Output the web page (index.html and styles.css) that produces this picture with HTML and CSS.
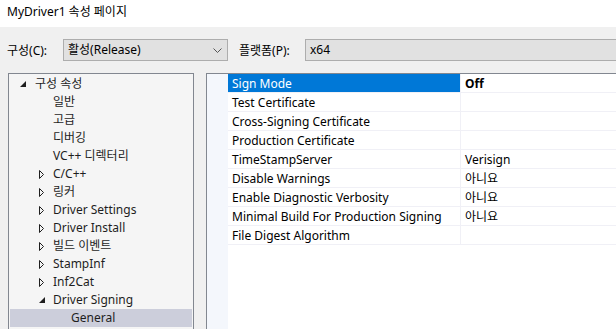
FILE: index.html
```html
<!DOCTYPE html>
<html lang="ko">
<head>
    <meta charset="UTF-8">
    <title>MyDriver1 속성 페이지</title>
    <link rel="stylesheet" href="styles.css">
</head>
<body>

    <div class="titlebar">MyDriver1 속성 페이지</div>

    <div class="dialog">
        <!-- Configuration / platform row -->
        <div class="config-row">
            <span class="config-label">구성(C):</span>
            <div class="combo">
                <span>활성(Release)</span>
                <svg class="chevron" width="9" height="5" viewBox="0 0 9 5"><polyline points="0.5,0.5 4.5,4.5 8.5,0.5" fill="none" stroke="#555" stroke-width="1"/></svg>
            </div>
            <span class="platform-label">플랫폼(P):</span>
            <div class="combo platform">x64</div>
        </div>

        <div class="panes">
            <!-- Category tree -->
            <ul class="tree">
                <li class="node lvl0"><svg class="expanded" width="6" height="6" viewBox="0 0 6 6"><polygon points="6,0 6,6 0,6" fill="#1e1e1e"/></svg>구성 속성</li>
                <li class="node lvl1">일반</li>
                <li class="node lvl1">고급</li>
                <li class="node lvl1">디버깅</li>
                <li class="node lvl1">VC++ 디렉터리</li>
                <li class="node lvl1"><svg class="collapsed" width="5" height="9" viewBox="0 0 5 9"><polygon points="0.5,0.5 4.5,4.5 0.5,8.5" fill="none" stroke="#1e1e1e" stroke-width="1"/></svg>C/C++</li>
                <li class="node lvl1"><svg class="collapsed" width="5" height="9" viewBox="0 0 5 9"><polygon points="0.5,0.5 4.5,4.5 0.5,8.5" fill="none" stroke="#1e1e1e" stroke-width="1"/></svg>링커</li>
                <li class="node lvl1"><svg class="collapsed" width="5" height="9" viewBox="0 0 5 9"><polygon points="0.5,0.5 4.5,4.5 0.5,8.5" fill="none" stroke="#1e1e1e" stroke-width="1"/></svg>Driver Settings</li>
                <li class="node lvl1"><svg class="collapsed" width="5" height="9" viewBox="0 0 5 9"><polygon points="0.5,0.5 4.5,4.5 0.5,8.5" fill="none" stroke="#1e1e1e" stroke-width="1"/></svg>Driver Install</li>
                <li class="node lvl1"><svg class="collapsed" width="5" height="9" viewBox="0 0 5 9"><polygon points="0.5,0.5 4.5,4.5 0.5,8.5" fill="none" stroke="#1e1e1e" stroke-width="1"/></svg>빌드 이벤트</li>
                <li class="node lvl1"><svg class="collapsed" width="5" height="9" viewBox="0 0 5 9"><polygon points="0.5,0.5 4.5,4.5 0.5,8.5" fill="none" stroke="#1e1e1e" stroke-width="1"/></svg>StampInf</li>
                <li class="node lvl1"><svg class="collapsed" width="5" height="9" viewBox="0 0 5 9"><polygon points="0.5,0.5 4.5,4.5 0.5,8.5" fill="none" stroke="#1e1e1e" stroke-width="1"/></svg>Inf2Cat</li>
                <li class="node lvl1"><svg class="expanded" width="6" height="6" viewBox="0 0 6 6"><polygon points="6,0 6,6 0,6" fill="#1e1e1e"/></svg>Driver Signing</li>
                <li class="node lvl2 selected">General</li>
            </ul>

            <!-- Property grid -->
            <div class="grid">
                <div class="row active"><span class="name">Sign Mode</span><span class="value bold">Off</span></div>
                <div class="row"><span class="name">Test Certificate</span><span class="value"></span></div>
                <div class="row"><span class="name">Cross-Signing Certificate</span><span class="value"></span></div>
                <div class="row"><span class="name">Production Certificate</span><span class="value"></span></div>
                <div class="row"><span class="name">TimeStampServer</span><span class="value">Verisign</span></div>
                <div class="row"><span class="name">Disable Warnings</span><span class="value">아니요</span></div>
                <div class="row"><span class="name">Enable Diagnostic Verbosity</span><span class="value">아니요</span></div>
                <div class="row"><span class="name">Minimal Build For Production Signing</span><span class="value">아니요</span></div>
                <div class="row"><span class="name">File Digest Algorithm</span><span class="value"></span></div>
            </div>
        </div>
    </div>

</body>
</html>
```

FILE: styles.css
```css
html, body {
    margin: 0;
    height: 100%;
    overflow: hidden;
}

body {
    font-family: "Segoe UI", "Noto Sans", "Noto Sans CJK KR", sans-serif;
    font-size: 12px;
    color: #1e1e1e;
    background-color: #f0f0f0;
}

.titlebar {
    height: 27px;
    line-height: 24px;
    padding-left: 7px;
    background-color: #fff;
    color: #000;
}

.config-row {
    display: flex;
    align-items: center;
    height: 46px;
    padding-left: 7px;
    color: #000;
}

.config-label {
    width: 56px;
}

.combo {
    box-sizing: border-box;
    height: 22px;
    line-height: 20px;
    padding-left: 4px;
    border: 1px solid #adadad;
    background-color: #e1e1e1;
    display: flex;
    align-items: center;
}

.combo span {
    flex: 1;
}

.combo:first-of-type {
    width: 165px;
}

.chevron {
    margin-right: 5px;
}

.platform-label {
    margin-left: 11px;
    width: 66px;
}

.combo.platform {
    flex: 1;
    margin-right: -20px;
}

.panes {
    display: flex;
    align-items: flex-start;
    padding-left: 8px;
    gap: 12px;
    height: 256px;
}

.tree {
    box-sizing: border-box;
    list-style: none;
    margin: 0;
    padding: 1px 0 0 1px;
    width: 186px;
    height: 100%;
    border: 1px solid #828790;
    border-bottom: none;
    background-color: #f5f5f5;
}

.node {
    height: 18px;
    line-height: 18px;
    display: flex;
    align-items: center;
    white-space: nowrap;
}

.node svg {
    flex: none;
}

.lvl0 {
    padding-left: 10px;
}

.lvl0 .expanded {
    margin-right: 9px;
}

.lvl1 {
    padding-left: 43px;
}

.lvl1 .collapsed {
    margin-left: -14px;
    margin-right: 9px;
}

.lvl1 .expanded {
    margin-left: -14px;
    margin-right: 8px;
}

.lvl2 {
    padding-left: 61px;
    width: 182px;
    box-sizing: border-box;
}

.selected {
    background-color: #cccedb;
}

.grid {
    flex: 1;
    height: 100%;
    margin-right: -20px;
    border-top: 1px solid #828790;
    border-left: 1px solid #828790;
    background-color: #fff;
    padding-left: 21px;
    background-image: linear-gradient(to right, #f4f7fc 21px, #fff 21px);
    color: #000;
}

.row {
    display: flex;
    height: 19px;
    line-height: 20px;
    border-bottom: 1px solid #f0f0f6;
    box-sizing: border-box;
}

.name {
    width: 233px;
    padding-left: 4px;
    box-sizing: border-box;
    border-right: 1px solid #f0f0f6;
    white-space: nowrap;
}

.value {
    flex: 1;
    padding-left: 4px;
}

.bold {
    font-weight: bold;
}

.row.active .name {
    background-color: #0078d7;
    color: #fff;
}
```
